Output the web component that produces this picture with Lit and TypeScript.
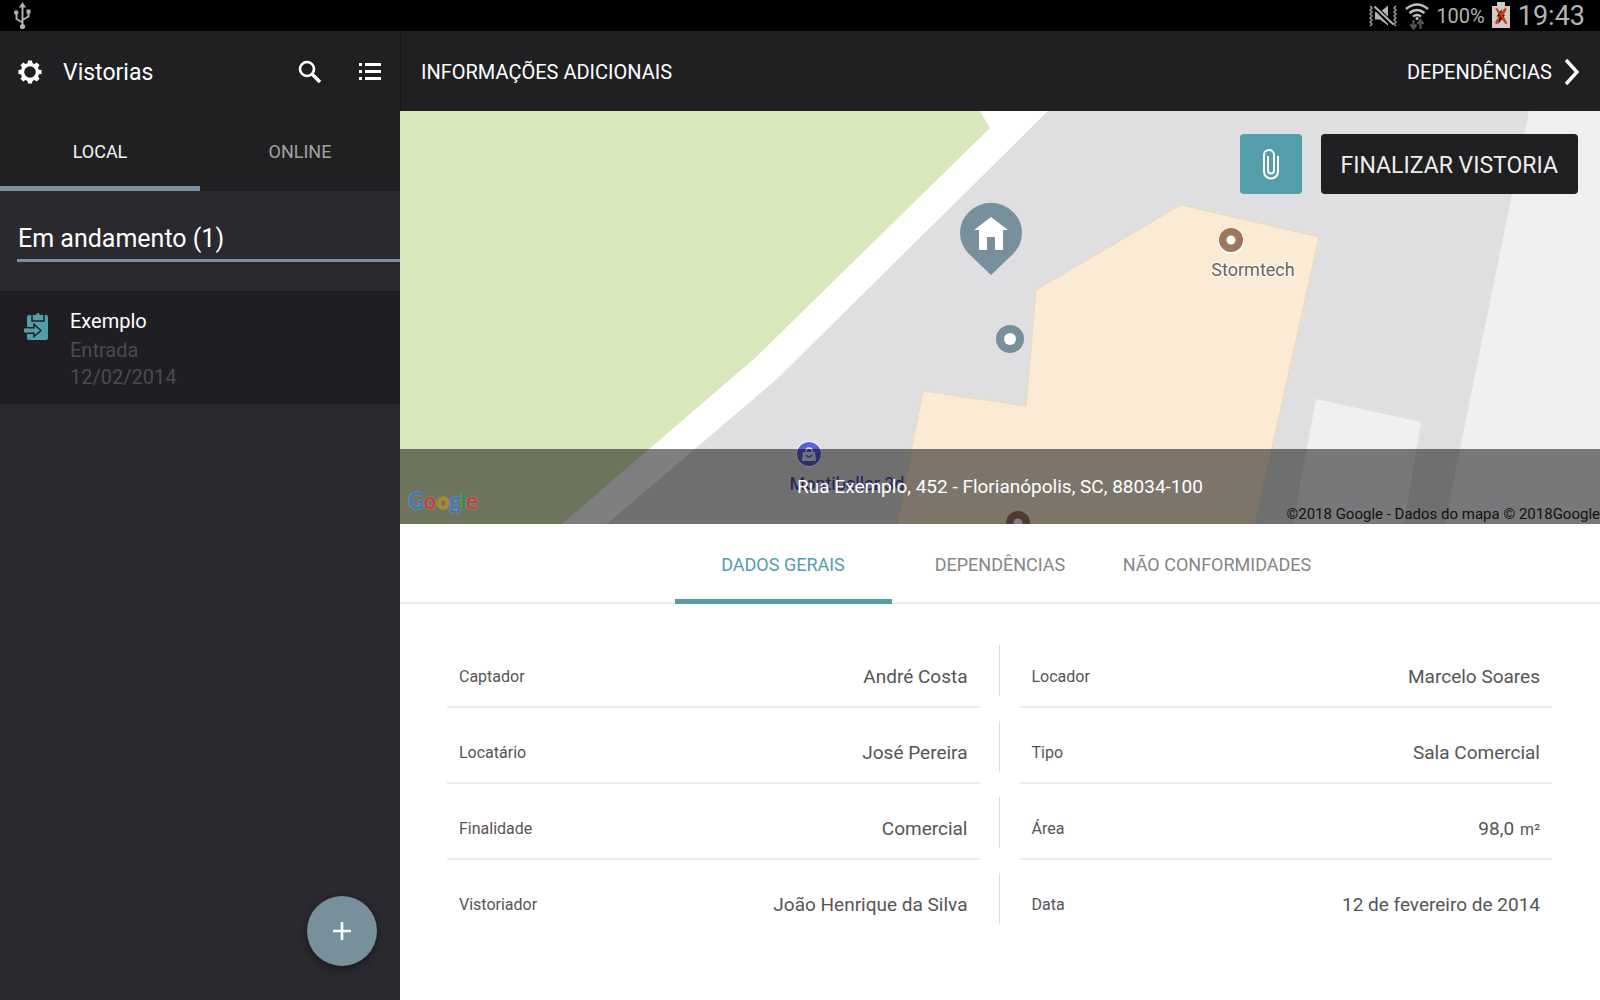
import { LitElement, html, css, svg } from "lit";
import { customElement, property, state } from "lit/decorators.js";
import { classMap } from "lit/directives/class-map.js";

interface Field {
  label: string;
  value: string;
  unit?: string;
}

const FIELDS: Field[] = [
  { label: "Captador", value: "André Costa" },
  { label: "Locador", value: "Marcelo Soares" },
  { label: "Locatário", value: "José Pereira" },
  { label: "Tipo", value: "Sala Comercial" },
  { label: "Finalidade", value: "Comercial" },
  { label: "Área", value: "98,0", unit: "m²" },
  { label: "Vistoriador", value: "João Henrique da Silva" },
  { label: "Data", value: "12 de fevereiro de 2014" },
];

const GEAR_ANGLES = [0, 45, 90, 135, 180, 225, 270, 315];

@customElement("status-bar")
export class StatusBar extends LitElement {
  static styles = css`
    :host {
      display: flex;
      align-items: center;
      justify-content: space-between;
      height: 31px;
      padding: 0 15px 0 13px;
      background: #000;
      color: #b4b4b4;
      font-size: 20px;
    }
    svg { display: block; }
    .tray { display: flex; align-items: center; gap: 7px; }
    .clock { padding: 2px 0 0 1px; font-size: 27px; line-height: 31px; }
  `;

  render() {
    return html`
      <svg width="20" height="29" viewBox="0 0 20 29" fill="none" stroke="#b0b0b0" stroke-width="2" aria-label="USB">
        <path d="M9.500 4v21M9.500 21.500l-6-3.500v-5M9.500 19l6-3.500v-5" />
        <path d="M9.500 1l3.500 5.500h-7z" fill="#b0b0b0" stroke="none" />
        <circle cx="9.500" cy="25.500" r="2.600" fill="#b0b0b0" stroke="none" />
        <circle cx="3.200" cy="11.500" r="2.200" fill="#b0b0b0" stroke="none" />
        <path d="M13.500 8.500h4v4h-4z" fill="#b0b0b0" stroke="none" />
      </svg>
      <div class="tray">
        <svg width="30" height="26" viewBox="0 0 30 26" aria-label="Vibrar">
          <path d="M7 9h5l8-6.500v20l-8-6h-5z" fill="#b4b4b4" />
          <path d="M6 3l19 19.500" stroke="#000" stroke-width="5" />
          <path d="M6.500 3.500l19 18" stroke="#b4b4b4" stroke-width="2" />
          <path d="M2 3l2 2-2 2 2 2-2 2 2 2-2 2 2 2-2 2 2 2-2 2M28 3l-2 2 2 2-2 2 2 2-2 2 2 2-2 2 2 2-2 2 2 2" fill="none" stroke="#9a9a9a" stroke-width="1.500" />
        </svg>
        <svg width="24" height="28" viewBox="0 0 24 28" fill="none" stroke="#c0c0c0" stroke-width="2.500" aria-label="Wi-Fi">
          <path d="M1 7q11-9 22 0M4.500 11q7.500-6 15 0M8 14.500q4-3 8 0" />
          <circle cx="12" cy="16.500" r="1.500" fill="#c0c0c0" stroke="none" />
          <path d="M8.500 18v8M5.500 22.500l3 4 3-4M15.500 27v-8M12.500 22l3-4 3 4" stroke="#555" stroke-width="2.200" />
        </svg>
        <span>100%</span>
        <svg width="18" height="27" viewBox="0 0 18 27" aria-label="Bateria">
          <path d="M5 0h8v4h5v22H0V4h5z" fill="#cfcbc8" />
          <path d="M3 5.500l6 5 4.500-5 1 2-3 6 4 9-2.500-1-4-5-4.500 6-1.500-2 4-7z" fill="#d23c14" />
          <path d="M10 7l-5.500 7.500h3.500l-2 8 7-9.500h-4z" fill="#3a1510" />
          <path d="M4.500 6.500l9.500 14" stroke="#d23c14" stroke-width="1.800" />
        </svg>
        <span class="clock">19:43</span>
      </div>
    `;
  }
}

@customElement("inspection-list")
export class InspectionList extends LitElement {
  @state() private tab = "LOCAL";

  static styles = css`
    :host {
      display: flex;
      flex-direction: column;
      position: relative;
      background: #2a2930;
      color: #fff;
    }
    button { border: 0; padding: 0; background: none; color: inherit; font: inherit; cursor: pointer; }
    svg { display: block; }
    .top { background: #202022; }
    .bar { display: flex; align-items: center; height: 80px; padding: 1px 15px 0; box-sizing: border-box; }
    .title { flex: 1; margin: 0; padding: 1px 0 0 18px; font-size: 23px; font-weight: 400; }
    .actions { display: flex; gap: 30px; }
    .tabs { display: grid; grid-template-columns: 1fr 1fr; }
    .tab { height: 80px; padding-top: 6px; border-bottom: 5px solid transparent; color: #a2a2a4; font-size: 18px; }
    .tab.active { border-color: #78909c; color: #f4f4f4; }
    .section { margin: 28px 0 29px 17px; border-bottom: 3px solid #78909c; padding-left: 1px; font-size: 25px; font-weight: 400; line-height: 40px; }
    .items { margin: 0; padding: 0; list-style: none; }
    .item { display: flex; gap: 21px; padding: 17px 24px 13px; width: 100%; background: #1f1e23; text-align: left; font-size: 20px; line-height: 27px; }
    .icon { padding-top: 5px; }
    .name { display: block; padding-bottom: 2px; }
    .meta { display: block; color: #4b4b4e; }
    .add {
      position: absolute;
      right: 23px;
      bottom: 34px;
      display: grid;
      place-items: center;
      width: 70px;
      height: 70px;
      border-radius: 50%;
      background: #78909c;
      box-shadow: 0 3px 8px rgba(0, 0, 0, 0.45);
    }
  `;

  private renderTab(name: string) {
    const active = this.tab === name;
    return html`<button
      role="tab"
      aria-selected=${active ? "true" : "false"}
      class=${classMap({ tab: true, active })}
      @click=${() => (this.tab = name)}
    >${name}</button>`;
  }

  render() {
    return html`
      <div class="top">
        <header class="bar">
          <button aria-label="Configurações">
            <svg width="30" height="30" viewBox="-15 -15 30 30">
              <circle r="7.500" fill="none" stroke="#fff" stroke-width="3.400" />
              ${GEAR_ANGLES.map((a) => svg`<path d="M-2.600 -8L-2 -11.500H2L2.600 -8z" fill="#fff" transform="rotate(${a})" />`)}
            </svg>
          </button>
          <h1 class="title">Vistorias</h1>
          <div class="actions">
            <button aria-label="Buscar">
              <svg width="30" height="30" viewBox="0 0 30 30" fill="none" stroke="#fff">
                <circle cx="12" cy="12" r="7" stroke-width="2.600" />
                <path d="M17 17l8 8" stroke-width="3.400" />
              </svg>
            </button>
            <button aria-label="Lista">
              <svg width="30" height="30" viewBox="0 0 30 30" fill="#fff">
                <path d="M4 6h3v3H4zM10 6h16v3H10zM4 13h3v3H4zM10 13h16v3H10zM4 20h3v3H4zM10 20h16v3H10z" />
              </svg>
            </button>
          </div>
        </header>
        <div class="tabs" role="tablist">${this.renderTab("LOCAL")}${this.renderTab("ONLINE")}</div>
      </div>
      <h2 class="section">Em andamento (1)</h2>
      <ul class="items">
        <li>
          <button class="item">
            <span class="icon">
              <svg width="25" height="28" viewBox="0 0 25 28">
                <path d="M5 2h17q2 0 2 2v21q0 2-2 2H5q-2 0-2-2V4q0-2 2-2z" fill="#549dab" />
                <path d="M8 2v6h12V2" fill="none" stroke="#1f1e23" stroke-width="1.500" />
                <path d="M9 7V3.500h3Q12 0 14 0t2 3.500h3V7z" fill="#549dab" />
                <path d="M1 14.800h9v-3.500l7 6.200-7 6.200v-3.500H1z" fill="#549dab" stroke="#1f1e23" stroke-width="1.500" />
                <path d="M0 15.500h4v4H0z" fill="#549dab" />
              </svg>
            </span>
            <span>
              <span class="name">Exemplo</span>
              <span class="meta">Entrada</span>
              <span class="meta">12/02/2014</span>
            </span>
          </button>
        </li>
      </ul>
      <button class="add" aria-label="Adicionar">
        <svg width="18" height="18" viewBox="0 0 18 18"><path d="M9 0v18M0 9h18" stroke="#fff" stroke-width="2.600" /></svg>
      </button>
    `;
  }
}

@customElement("location-map")
export class LocationMap extends LitElement {
  static styles = css`
    :host { display: block; position: relative; overflow: hidden; background: #dfdee0; }
    .canvas { position: absolute; inset: 0; width: 100%; height: 100%; }
    .place { font-size: 18px; text-anchor: middle; paint-order: stroke; }
    .tools { position: absolute; top: 23px; right: 22px; display: flex; gap: 19px; }
    button { display: grid; place-items: center; height: 60px; border: 0; border-radius: 4px; font: inherit; cursor: pointer; }
    .attach { width: 62px; padding: 0; background: #549dab; }
    .finish { padding: 2px 20px 0; background: #202022; color: #eee; font-size: 23px; }
    .address {
      position: absolute;
      left: 0;
      right: 0;
      bottom: 0;
      height: 75px;
      background: rgba(0, 0, 0, 0.5);
      color: #fff;
      font-size: 19px;
      line-height: 76px;
      text-align: center;
    }
    .google {
      position: absolute;
      left: 8px;
      bottom: 9px;
      font: 700 22px/28px "Lato", sans-serif;
      text-shadow: 0 0 2px rgba(255, 255, 255, 0.4);
    }
    .blue { color: #3f76bf; }
    .red { color: #c2413b; }
    .yellow { color: #b58a10; }
    .green { color: #2f8a4a; }
    .credit { position: absolute; right: 0; bottom: 0; color: #111; font-size: 15px; line-height: 20px; }
  `;

  render() {
    return html`
      <svg class="canvas" viewBox="0 0 1200 413" preserveAspectRatio="xMidYMid slice" aria-hidden="true">
        <path d="M0 0H1200V413H0z" fill="#dfdee0" />
        <path d="M0 0H580L590 17L355 247L162 413H0z" fill="#d8e8bb" />
        <path d="M580 0H648L378 267L207 413H162L355 247L590 17z" fill="#fff" />
        <path d="M1129 0H1200V413H1045L1074 269z" fill="#f1eff2" />
        <path d="M916 288L1021 311L1004 413H893z" fill="#f1eff2" />
        <path d="M781 94L919 126L855 413H497L523 280L626 295L636 179z" fill="#fbebd4" stroke="#ecd9b8" />
        <circle cx="831" cy="130" r="13" fill="#fff" />
        <circle cx="831" cy="129" r="12" fill="#9c7760" />
        <circle cx="831" cy="129" r="4.500" fill="#fff" />
        <text class="place" x="853" y="165" fill="#6d6258" stroke="#fff" stroke-width="2">Stormtech</text>
        <circle cx="409" cy="343" r="13" fill="#fff" />
        <circle cx="409" cy="343" r="12" fill="#5c62d6" />
        <path d="M403 341h12l1 9h-14z" fill="#e4e4f4" />
        <path d="M406 342v-2q0-3 3-3t3 3v2" fill="none" stroke="#e4e4f4" stroke-width="1.500" />
        <path d="M406 344q3 4 6 0" fill="none" stroke="#5c62d6" stroke-width="1.500" />
        <text class="place" x="447" y="379" fill="#4446b0">Montibeller 3d</text>
        <circle cx="618" cy="412" r="12" fill="#9c7760" />
        <circle cx="618" cy="412" r="4.500" fill="#fff" />
        <circle cx="610" cy="228" r="14" fill="#78909c" />
        <circle cx="610" cy="228" r="6" fill="#fff" />
        <path d="M591 164L569 143A31 30 0 1 1 613 143z" fill="#78909c" />
        <path d="M591 106l17 13h-5v20h-8v-13h-8v13h-8v-20h-5z" fill="#fff" />
      </svg>
      <div class="address">Rua Exemplo, 452 - Florianópolis, SC, 88034-100</div>
      <div class="google"><span class="blue">G</span><span class="red">o</span><span class="yellow">o</span><span class="blue">g</span><span class="green">l</span><span class="red">e</span></div>
      <div class="credit">©2018 Google - Dados do mapa © 2018Google</div>
      <div class="tools">
        <button class="attach" aria-label="Anexar">
          <svg width="18" height="32" viewBox="0 0 18 32" fill="none" stroke="#fff" stroke-width="2">
            <path d="M16 8v15.500a7 7 0 0 1-14 0V7a5 5 0 0 1 10 0v15.500a3 3 0 0 1-6 0V8" />
          </svg>
        </button>
        <button class="finish">FINALIZAR VISTORIA</button>
      </div>
    `;
  }
}

@customElement("inspection-fields")
export class InspectionFields extends LitElement {
  @property({ attribute: false }) fields: Field[] = [];

  static styles = css`
    :host { display: block; padding: 28px 48px 64px 47px; background: #fff; color: #555; }
    .grid { display: grid; grid-template-columns: 1fr 1fr; column-gap: 40px; margin: 0; }
    .row {
      position: relative;
      display: flex;
      align-items: center;
      justify-content: space-between;
      height: 76px;
      padding: 14px 12px 0;
      box-sizing: border-box;
      border-bottom: 2px solid #ececec;
    }
    .row:nth-last-child(-n + 2) { border-color: transparent; }
    .row:nth-child(odd)::after {
      content: "";
      position: absolute;
      top: 13px;
      right: -20px;
      height: 51px;
      border-right: 1px solid #dcdcdc;
    }
    .label { font-size: 16px; }
    .value { margin: 0; font-size: 19px; }
    .unit { padding-left: 6px; font-size: 16px; }
  `;

  render() {
    return html`<dl class="grid">
      ${this.fields.map(
        (f) => html`<div class="row">
          <dt class="label">${f.label}</dt>
          <dd class="value">${f.value}${f.unit ? html`<span class="unit">${f.unit}</span>` : ""}</dd>
        </div>`
      )}
    </dl>`;
  }
}

@customElement("app-root")
export class AppRoot extends LitElement {
  @state() private tab = "DADOS GERAIS";

  static styles = css`
    :host {
      display: flex;
      flex-direction: column;
      min-height: 100vh;
      font-family: Roboto, "Liberation Sans", sans-serif;
      background: #fff;
    }
    .body { flex: 1; display: grid; grid-template-columns: 1fr 3fr; }
    .detail { display: flex; flex-direction: column; min-width: 0; }
    .bar {
      display: flex;
      align-items: center;
      justify-content: space-between;
      height: 80px;
      padding: 2px 20px 0;
      box-sizing: border-box;
      border-left: 1px solid #161618;
      background: #202022;
      color: #fff;
      font-size: 20px;
    }
    .heading { margin: 0; font-size: 20px; font-weight: 400; }
    .next { display: flex; align-items: center; gap: 12px; color: inherit; text-decoration: none; }
    .map { flex: 1 0 300px; }
    .tabs { display: flex; justify-content: center; border-bottom: 2px solid #ececec; background: #fff; }
    .tab {
      width: 217px;
      height: 80px;
      margin-bottom: -2px;
      padding: 6px 0 0;
      border: 0;
      border-bottom: 5px solid transparent;
      background: none;
      color: #868686;
      font: inherit;
      font-size: 18px;
      cursor: pointer;
    }
    .tab.active { border-color: #549da3; color: #549dab; }
  `;

  render() {
    return html`
      <status-bar></status-bar>
      <div class="body">
        <inspection-list></inspection-list>
        <main class="detail">
          <header class="bar">
            <h2 class="heading">INFORMAÇÕES ADICIONAIS</h2>
            <a class="next" href="#dependencias">
              DEPENDÊNCIAS
              <svg width="16" height="28" viewBox="0 0 16 28"><path d="M2 2l11 12-11 12" fill="none" stroke="#fff" stroke-width="3.400" /></svg>
            </a>
          </header>
          <location-map class="map"></location-map>
          <div class="tabs" role="tablist">
            ${["DADOS GERAIS", "DEPENDÊNCIAS", "NÃO CONFORMIDADES"].map(
              (name) => html`<button
                role="tab"
                aria-selected=${this.tab === name ? "true" : "false"}
                class=${classMap({ tab: true, active: this.tab === name })}
                @click=${() => (this.tab = name)}
              >${name}</button>`
            )}
          </div>
          <inspection-fields .fields=${FIELDS}></inspection-fields>
        </main>
      </div>
    `;
  }
}
